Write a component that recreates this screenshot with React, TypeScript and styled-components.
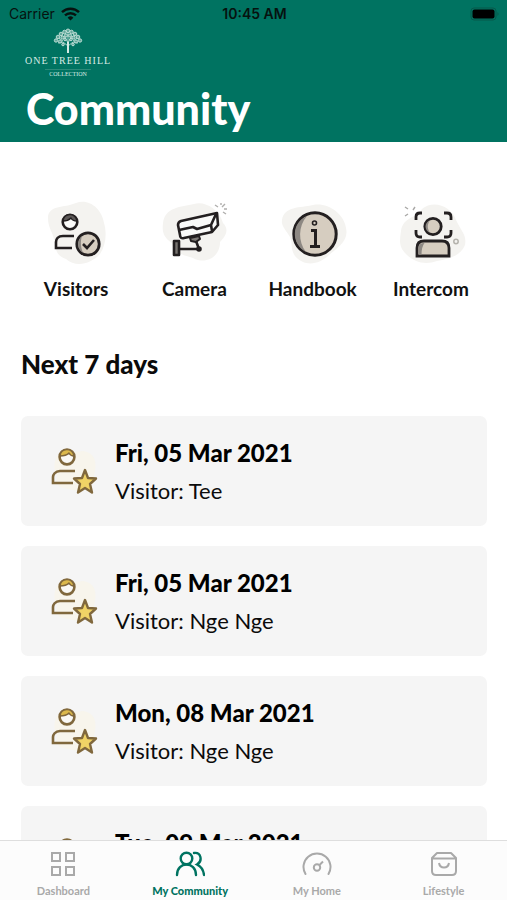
import React from 'react';
import styled, { createGlobalStyle } from 'styled-components';

const GREEN = '#007361';
const INK = '#231f20';

const GlobalStyle = createGlobalStyle`
  *, *::before, *::after { box-sizing: border-box; }
  html, body { margin: 0; }
  body {
    background: #fff;
    color: #0b0b0b;
    font-family: Lato, 'Open Sans', sans-serif;
  }
  h1, h2, h3, p, ul { margin: 0; padding: 0; }
`;

const Screen = styled.div`
  display: flex;
  flex-direction: column;
  height: 100vh;
  overflow: hidden;
`;

const Header = styled.header`
  flex: none;
  background: ${GREEN};
  padding-bottom: 7px;
`;

const StatusBar = styled.div`
  display: grid;
  grid-template-columns: 1fr auto 1fr;
  align-items: center;
  height: 28px;
  padding: 0 7px 0 9px;
  color: #06120f;
  font: 400 14px/18px Inter, sans-serif;
`;

const Carrier = styled.div`
  display: flex;
  align-items: center;
  gap: 6px;
`;

const Clock = styled.time`
  font-weight: 600;
`;

const Battery = styled.svg`
  justify-self: end;
`;

const Brand = styled.div`
  display: flex;
  flex-direction: column;
  align-items: center;
  width: max-content;
  margin-left: 25px;
  color: #d7ebe5;
  font-family: 'Liberation Serif', serif;
`;

const BrandName = styled.span`
  font-size: 10px;
  line-height: 13px;
  letter-spacing: 1px;
`;

const BrandSub = styled.span`
  margin-top: 2px;
  padding: 0 4px;
  border-top: 1px solid #2c8a7a;
  font-size: 6px;
  line-height: 9px;
`;

const Title = styled.h1`
  margin: 4px 26px 0;
  color: #fff;
  font-size: 43px;
  font-weight: 900;
  line-height: 52px;
`;

const Content = styled.main`
  flex: 1;
  min-height: 0;
  overflow: hidden;
`;

const Shortcuts = styled.nav`
  display: grid;
  grid-template-columns: repeat(4, 1fr);
  padding: 57px 17px 0;
`;

const Shortcut = styled.button`
  display: flex;
  flex-direction: column;
  align-items: center;
  gap: 6px;
  padding: 0;
  border: 0;
  background: none;
  color: #111;
  font: 700 19px/24px Lato, sans-serif;
  cursor: pointer;
`;

const SectionTitle = styled.h2`
  margin: 47px 21px 0;
  font-size: 26px;
  font-weight: 900;
  line-height: 32px;
`;

const VisitList = styled.ul`
  display: flex;
  flex-direction: column;
  gap: 20px;
  padding: 36px 20px 0 21px;
  list-style: none;
`;

const Visit = styled.li`
  display: flex;
  align-items: center;
  gap: 14px;
  height: 110px;
  padding: 2px 28px 0;
  border-radius: 7px;
  background: #f5f5f5;
`;

const VisitDate = styled.h3`
  color: #000;
  font-size: 24px;
  font-weight: 900;
  line-height: 32px;
`;

const Visitor = styled.p`
  margin-top: 6px;
  font-size: 22px;
  line-height: 32px;
`;

const TabBar = styled.nav`
  flex: none;
  display: grid;
  grid-template-columns: repeat(4, 1fr);
  height: 60px;
  border-top: 1px solid #dedede;
  background: #fcfcfc;
`;

const Tab = styled.a<{ $active?: boolean }>`
  display: flex;
  flex-direction: column;
  align-items: center;
  gap: 5px;
  padding-top: 7px;
  color: ${(p) => (p.$active ? GREEN : '#a9a9a9')};
  font-size: 11px;
  font-weight: ${(p) => (p.$active ? 900 : 700)};
  line-height: 16px;
  text-decoration: none;
`;

const WifiIcon = () => (
  <svg width="19" height="14" viewBox="0 0 19 14" fill="none" stroke="#06120f" strokeWidth="2.4" aria-hidden="true">
    <path d="M1 5.2a12.2 12.2 0 0 1 17 0" />
    <path d="M4 8.4a8 8 0 0 1 11 0" />
    <path d="M6.6 10.7a4.2 4.2 0 0 1 5.8 0L9.5 13.6z" fill="#06120f" stroke="none" />
  </svg>
);

const TreeIcon = () => (
  <svg width="30" height="26" viewBox="0 0 30 26" fill="none" stroke="#d7ebe5" aria-hidden="true">
    <path strokeWidth="2" d="M15 25V14" />
    <path strokeWidth="0.8" d="M15 18l-5-4-5 1M15 18l5-4 5 1M15 15l-3-6-4-1M15 15l3-6 4-1M15 14V4M10 13l-4-3M20 13l4-3" />
    <g strokeWidth="0.8" fill="#63a89b">
      <circle cx="15" cy="2.8" r="1.8" />
      <circle cx="11.5" cy="4" r="1.8" />
      <circle cx="18.5" cy="4" r="1.8" />
      <circle cx="8" cy="6" r="1.8" />
      <circle cx="22" cy="6" r="1.8" />
      <circle cx="13" cy="7.5" r="1.6" />
      <circle cx="17" cy="7.5" r="1.6" />
      <circle cx="5" cy="9" r="1.8" />
      <circle cx="25" cy="9" r="1.8" />
      <circle cx="9.5" cy="9.5" r="1.6" />
      <circle cx="20.5" cy="9.5" r="1.6" />
      <circle cx="12" cy="11.5" r="1.3" />
      <circle cx="18" cy="11.5" r="1.3" />
      <circle cx="3" cy="12.5" r="1.7" />
      <circle cx="27" cy="12.5" r="1.7" />
      <circle cx="7" cy="13.5" r="1.6" />
      <circle cx="23" cy="13.5" r="1.6" />
      <circle cx="10" cy="16.5" r="1.3" />
      <circle cx="20" cy="16.5" r="1.3" />
    </g>
  </svg>
);

const VisitorsIcon = () => (
  <svg width="72" height="72" viewBox="0 0 72 72" fill="none" aria-hidden="true">
    <path fill="#f4f3f0" d="M8 19C8 6 24 9 36 4c13-5 26 6 28 20 3 10 2 22-4 31-9 10-24 14-34 5-12-4-10-13-12-20C12 32 8 28 8 19z" />
    <circle cx="30" cy="23" r="7.3" stroke={INK} strokeWidth="2.6" fill="#fbfbfa" />
    <path fill="#5c5857" stroke={INK} strokeWidth="1.4" strokeLinejoin="round" d="M23 22c1-8 12-9 14 0-3 0-5-1-6-3-2 2-5 3-8 3z" />
    <path stroke={INK} strokeWidth="2.6" d="M34 37H23c-5 0-7 3-7 6v6h16" />
    <circle cx="48" cy="45" r="11.2" fill="#d6cdc0" stroke={INK} strokeWidth="2.8" />
    <path fill="#8d8883" d="M42 37c-6 5-5 13 1 17-2-5-3-11-1-17z" />
    <path stroke={INK} strokeWidth="2.6" d="M43 45l4 4 7-8" />
  </svg>
);

const CameraIcon = () => (
  <svg width="72" height="72" viewBox="0 0 72 72" fill="none" stroke={INK} strokeWidth="2.6" strokeLinejoin="round" aria-hidden="true">
    <path fill="#f4f3f0" stroke="none" d="M5 24C7 8 23 8 36 5c11-3 25 5 29 19 7 7 2 14-3 19 0 15-14 23-27 16-10-3-20-5-21-15C5 38 4 32 5 24z" />
    <path fill="#fafaf9" d="M20 26q0-3 3-4l36-8 1 12-6 7-28 6q-4 1-4-3z" />
    <path d="M21 31l14-3 4 2 14-4M58 15l-5 11 1 6" />
    <path d="M32 39l9-2 1 3-4 3-5-1z" fill="#7d7976" strokeWidth="2" />
    <path d="M38 42l3 8M22 50h19" />
    <circle cx="41" cy="50" r="1.5" fill={INK} />
    <rect x="16" y="42" width="5" height="14" fill="#77736f" />
    <path stroke="#b0afad" strokeWidth="1.4" d="M57 6l3 2M67 5l-3 3M65 13l3 2M63 4v2M66 10h3" />
  </svg>
);

const HandbookIcon = () => (
  <svg width="72" height="72" viewBox="0 0 72 72" fill="none" aria-hidden="true">
    <path fill="#f4f3f0" d="M5 21C7 7 23 9 36 6c14-3 31 8 33 23 3 13-8 19-17 27-10 10-25 12-34 1-5-8-2-12-5-19C9 31 4 27 5 21z" />
    <circle cx="38" cy="35" r="21.2" fill="#d6cdc0" stroke={INK} strokeWidth="3" />
    <path fill="#8d8883" d="M30 17c-16 7-16 28-1 36-8-10-8-26 1-36z" />
    <circle cx="37.5" cy="24" r="2" stroke={INK} strokeWidth="1.6" />
    <path stroke={INK} strokeWidth="3" d="M34 31.5h4.5V47M33 47.5h10" />
  </svg>
);

const IntercomIcon = () => (
  <svg width="72" height="72" viewBox="0 0 72 72" fill="none" stroke={INK} strokeWidth="2.8" aria-hidden="true">
    <path fill="#f4f3f0" stroke="none" d="M6 32C8 18 20 20 27 10c12-10 30-2 34 11 5 11 11 15 9 25-4 11-17 14-28 16-11 4-22 2-31-7-8-8-6-15-5-23z" />
    <path d="M21 21v-3q0-4 4-4h2M49 14h3q4 0 4 4v3M21 31v3q0 4 4 4h2M49 38h3q4 0 4-4v-3" />
    <circle cx="38" cy="27.5" r="8.2" fill="#d6cdc0" />
    <path fill="#8d8883" stroke="none" d="M35 21c-6 3-6 10 0 13-3-5-3-8 0-13z" />
    <path fill="#d6cdc0" d="M22 57V49q0-7 7-7h18q7 0 7 7v8z" />
    <path fill="#8d8883" stroke="none" d="M23.5 55.500v-6.500q0-5 6-5-3 4-3 11.500z" />
    <circle cx="61" cy="42.5" r="2.2" stroke="#b4b2ac" strokeWidth="1.5" />
    <path stroke="#aaa9a7" strokeWidth="1.4" d="M10 8l3 2M20 8l-2 3M10 17l3-2" />
  </svg>
);

const GuestIcon = () => (
  <svg width="52" height="52" viewBox="0 0 52 52" fill="none" stroke="#80683d" strokeWidth="2.6" aria-hidden="true">
    <path fill="#f8f5ec" stroke="none" d="M8 10C14 4 23 7 34 5c14 2 14 14 11 25-2 13-15 17-25 13C9 42 6 39 8 30 5 25 4 17 8 10z" />
    <circle cx="18" cy="11" r="7.4" fill="#faf9f6" />
    <path fill="#dcb94c" strokeWidth="1.4" strokeLinejoin="round" d="M11 10c1-8 12-9 14 0-3 0-4-1-5-3-2 2-5 3-9 3z" />
    <path d="M26 25H11c-5 0-7 4-7 6v6h20" />
    <path fill="#f0d366" strokeLinejoin="round" strokeWidth="2.4" d="M36 24l3 8 8 .5-6 5.500 2 8.500-7-4.500-7 4.500 2-8.500-6-5.500 8-.5z" />
  </svg>
);

const shortcuts = [
  { label: 'Visitors', Icon: VisitorsIcon },
  { label: 'Camera', Icon: CameraIcon },
  { label: 'Handbook', Icon: HandbookIcon },
  { label: 'Intercom', Icon: IntercomIcon },
];

const visits = [
  { date: 'Fri, 05 Mar 2021', guest: 'Tee' },
  { date: 'Fri, 05 Mar 2021', guest: 'Nge Nge' },
  { date: 'Mon, 08 Mar 2021', guest: 'Nge Nge' },
  { date: 'Tue, 09 Mar 2021', guest: 'Nge Nge' },
];

const tabs = [
  { label: 'Dashboard', art: <path d="M4 5h8v8H4zM18 5h8v8h-8zM4 19h8v8H4zM18 19h8v8h-8z" /> },
  {
    label: 'My Community',
    active: true,
    art: (
      <g strokeWidth="2.4" strokeLinecap="round">
        <circle cx="11.5" cy="10.5" r="5.8" />
        <path d="M2 27c0-14 19-14 19 0M19 5c7-1 9 8 3 11.500 4 2 6.500 5 7 10.500" />
      </g>
    ),
  },
  {
    label: 'My Home',
    art: (
      <>
        <path strokeLinecap="round" d="M3.500 26A13.500 13.500 0 1 1 26.500 26" />
        <circle cx="15" cy="19.5" r="3.2" />
        <path d="M17.500 17L21 13.500" />
      </>
    ),
  },
  {
    label: 'Lifestyle',
    art: <path d="M3 10l5-5h14l5 5v13q0 4-4 4H7q-4 0-4-4zM3 10.500h24M10 15c1 6 9 6 10 0" strokeLinejoin="round" />,
  },
];

export default function App() {
  return (
    <>
      <GlobalStyle />
      <Screen>
        <Header>
          <StatusBar>
            <Carrier>
              <span>Carrier</span>
              <WifiIcon />
            </Carrier>
            <Clock>10:45 AM</Clock>
            <Battery width="30" height="14" viewBox="0 0 30 14" aria-label="Battery full">
              <rect x="1" y="1" width="25" height="12" rx="3" fill="none" stroke="#07584b" />
              <rect x="2.5" y="2.5" width="22" height="9" rx="2" fill="#000" />
              <path d="M27.500 5v4q2-2 0-4z" fill="#07584b" />
            </Battery>
          </StatusBar>
          <Brand>
            <TreeIcon />
            <BrandName>ONE TREE HILL</BrandName>
            <BrandSub>COLLECTION</BrandSub>
          </Brand>
          <Title>Community</Title>
        </Header>
        <Content>
          <Shortcuts aria-label="Community services">
            {shortcuts.map(({ label, Icon }) => (
              <Shortcut key={label} type="button">
                <Icon />
                {label}
              </Shortcut>
            ))}
          </Shortcuts>
          <SectionTitle>Next 7 days</SectionTitle>
          <VisitList>
            {visits.map(({ date, guest }, i) => (
              <Visit key={i}>
                <GuestIcon />
                <div>
                  <VisitDate>{date}</VisitDate>
                  <Visitor>Visitor: {guest}</Visitor>
                </div>
              </Visit>
            ))}
          </VisitList>
        </Content>
        <TabBar aria-label="Main">
          {tabs.map(({ label, active, art }) => (
            <Tab key={label} href="#" $active={active} aria-current={active ? 'page' : undefined}>
              <svg width="30" height="30" viewBox="0 0 30 30" fill="none" stroke="currentColor" strokeWidth="2" aria-hidden="true">
                {art}
              </svg>
              {label}
            </Tab>
          ))}
        </TabBar>
      </Screen>
    </>
  );
}
